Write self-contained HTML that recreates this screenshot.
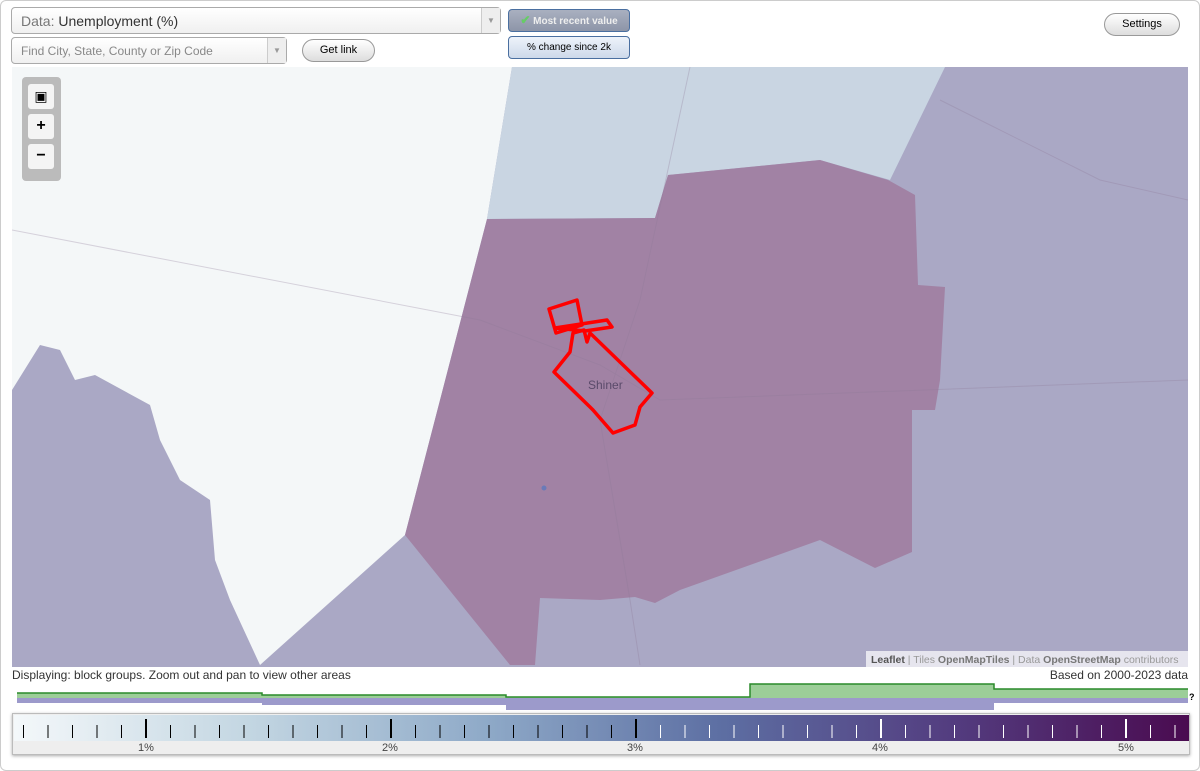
<!DOCTYPE html>
<html><head><style>
body{margin:0;width:1200px;height:771px;background:#fff;font-family:"Liberation Sans",sans-serif;overflow:hidden;position:relative}
.frame{position:absolute;left:0;top:0;width:1198px;height:769px;border:1px solid #ccc;border-radius:6px}
.sel{position:absolute;background:linear-gradient(#fff,#f0f0f0);border:1px solid #aaa;border-radius:4px;box-sizing:border-box}
.arr{position:absolute;right:0;top:0;bottom:0;width:18px;border-left:1px solid #ccc;background:#eee;color:#999;font-size:8px;text-align:center}
.btn{position:absolute;border:1px solid #999;border-radius:12px;background:linear-gradient(#fff,#ddd);font-size:11px;text-align:center;box-sizing:border-box}
.t{position:absolute;font-size:12px;color:#333}
</style></head><body>
<div class="frame"></div>
<div class="sel" style="left:11px;top:7px;width:490px;height:27px"><span style="position:absolute;left:9px;top:5px;font-size:14px;color:#333"><span style="color:#777">Data:</span> Unemployment (%)</span><div class="arr" style="line-height:26px">▼</div></div>
<div class="sel" style="left:11px;top:37px;width:276px;height:27px"><span style="position:absolute;left:9px;top:6px;font-size:12px;color:#888">Find City, State, County or Zip Code</span><div class="arr" style="line-height:26px">▼</div></div>
<div class="btn" style="left:302px;top:39px;width:73px;height:23px;line-height:21px">Get link</div>
<div class="btn" style="left:508px;top:9px;width:122px;height:23px;border-radius:4px;border-color:#4a6fa0;background:linear-gradient(#a9b0c0,#8d95a8);color:#eee;font-weight:bold;font-size:10px;line-height:20px"><span style="color:#6c6;font-size:12px">✔</span> Most recent value</div>
<div class="btn" style="left:508px;top:36px;width:122px;height:23px;border-radius:4px;border-color:#4a6fa0;background:linear-gradient(#eef3fa,#cdd9ea);font-size:10px;line-height:21px">% change since 2k</div>
<div class="btn" style="left:1104px;top:13px;width:76px;height:23px;line-height:21px">Settings</div>

<svg style="position:absolute;left:12px;top:67px" width="1176" height="600" viewBox="12 67 1176 600">
<rect x="12" y="67" width="1176" height="600" fill="#aaa8c5"/>
<polygon fill="#f4f7f8" points="12,67 512,67 487,219 405,535 260,665 230,600 215,560 210,500 180,480 160,440 150,405 95,375 75,380 60,350 40,345 12,390"/>
<polygon fill="#c9d5e2" points="512,67 945,67 890,180 820,160 668,175 655,218 487,219"/>
<polygon fill="#a182a4" points="487,219 655,218 668,175 820,160 888,180 915,195 918,285 945,287 940,380 935,410 912,410 912,552 875,568 820,540 680,590 655,603 635,597 600,600 540,598 535,665 510,665 405,535"/>
<g stroke="#8f7a99" stroke-width="1" fill="none" opacity=".3">
<path d="M12,230 L480,320 L600,365 L660,400 L1188,380"/>
<path d="M690,67 L640,300 L600,420 L630,600 L640,665"/>
<path d="M940,100 L1100,180 L1188,200"/>
</g>
<g fill="none" stroke="#f00" stroke-width="3.5" stroke-linejoin="round">
<polygon points="549,309 577,300 582,325 556,333"/>
<polygon points="555,328 607,320 612,327 585,331"/>
<polygon points="573,333 570,352 554,372 590,407 593,410 613,433 635,425 640,407 652,393 590,333 587,342 584,330"/>
</g>
<text x="588" y="389" font-size="12" fill="#5a4a6a" font-family="Liberation Sans">Shiner</text>
<circle cx="544" cy="488" r="2.5" fill="#6a7ab8"/>
<rect x="866" y="651" width="322" height="16" fill="rgba(255,255,255,.7)"/>
<text x="871" y="663" font-size="10.5" fill="#999" font-family="Liberation Sans"><tspan fill="#555" font-weight="bold">Leaflet</tspan> | Tiles <tspan fill="#777" font-weight="bold">OpenMapTiles</tspan> | Data <tspan fill="#777" font-weight="bold">OpenStreetMap</tspan> contributors</text>
</svg>
<div style="position:absolute;left:22px;top:77px;width:39px;height:104px;background:#bbb;border-radius:4px"></div>
<div style="position:absolute;left:28px;top:84px;width:26px;height:25px;background:#f4f4f4;border-radius:3px;text-align:center;font-size:14px;line-height:25px">▣</div>
<div style="position:absolute;left:28px;top:114px;width:26px;height:25px;background:#f4f4f4;border-radius:3px;text-align:center;font-weight:bold;font-size:16px;line-height:24px">+</div>
<div style="position:absolute;left:28px;top:144px;width:26px;height:25px;background:#f4f4f4;border-radius:3px;text-align:center;font-weight:bold;font-size:16px;line-height:24px">−</div>

<div class="t" style="left:12px;top:668px">Displaying: block groups. Zoom out and pan to view other areas</div>
<div class="t" style="right:12px;top:668px">Based on 2000-2023 data</div>

<svg style="position:absolute;left:0;top:680px" width="1200" height="35">
<path d="M17,13 H262 V15 H506 V17 H750 V4 H994 V9 H1188 V18 H17Z" fill="#9cce98"/>
<path d="M17,13 H262 V15 H506 V17 H750 V4 H994 V9 H1188" fill="none" stroke="#2a8a2a" stroke-width="1.5"/>
<g fill="#9c9acb">
<rect x="17" y="18" width="245" height="5"/><rect x="262" y="18" width="244" height="7"/><rect x="506" y="18" width="244" height="12"/><rect x="750" y="18" width="244" height="12"/><rect x="994" y="18" width="194" height="5"/>
</g>
<text x="1189" y="20" font-size="9" font-weight="bold">?</text>
</svg>

<div style="position:absolute;left:12px;top:713px;width:1178px;height:42px;border:1px solid #bbb;box-sizing:border-box;box-shadow:0 1px 3px #aaa;background:#eee"></div>
<svg style="position:absolute;left:14px;top:715px" width="1175" height="39">
<defs><linearGradient id="g" x1="0" x2="1"><stop offset="0" stop-color="#f4f8fa"/><stop offset=".2" stop-color="#c3d6e2"/><stop offset=".4" stop-color="#8faac8"/><stop offset=".6" stop-color="#5d6fa3"/><stop offset=".8" stop-color="#533c7f"/><stop offset="1" stop-color="#4a0b50"/></linearGradient></defs>
<rect width="1175" height="26" fill="url(#g)"/>
<g id="ticks"></g>
<g font-size="11" fill="#444" text-anchor="middle" font-family="Liberation Sans">
<text x="132" y="36">1%</text><text x="376" y="36">2%</text><text x="621" y="36">3%</text><text x="866" y="36">4%</text><text x="1112" y="36">5%</text></g>
</svg>
<script>
var g=document.getElementById('ticks'),s='';
for(var i=0;i<48;i++){var x=9.5+i*24.5;if(x>1172)break;var major=(i%10==5);var col=x<640?'#000':'#fff';
s+='<line x1="'+x+'" x2="'+x+'" y1="'+(major?4:10)+'" y2="23" stroke="'+col+'" stroke-width="'+(major?2:1)+'"/>';}
g.innerHTML=s;
</script>
</body></html>
